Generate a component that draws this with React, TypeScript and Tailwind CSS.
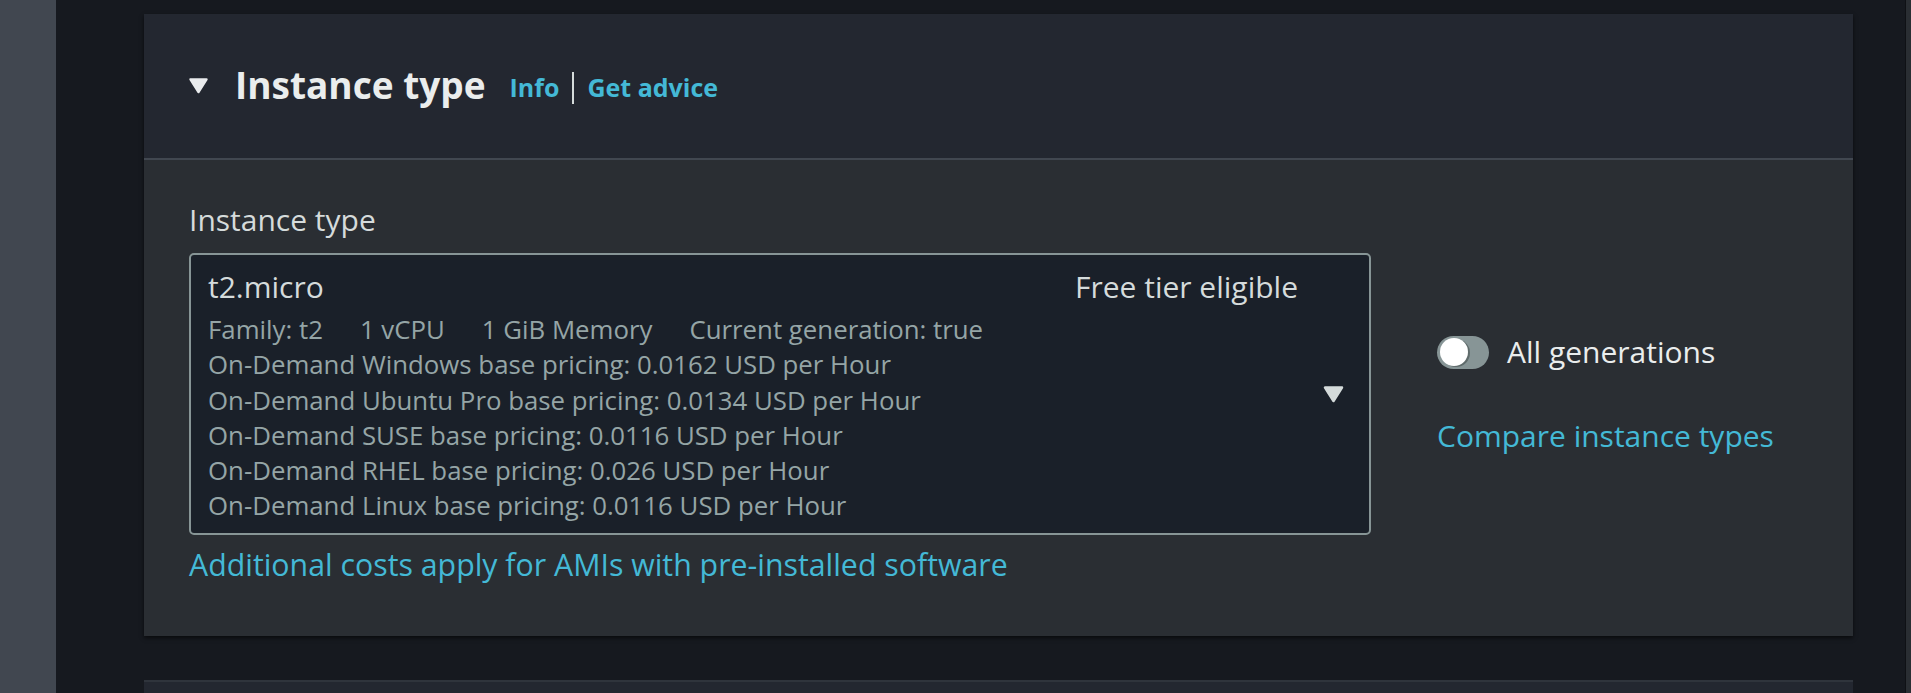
const pricing = [
  'On-Demand Windows base pricing: 0.0162 USD per Hour',
  'On-Demand Ubuntu Pro base pricing: 0.0134 USD per Hour',
  'On-Demand SUSE base pricing: 0.0116 USD per Hour',
  'On-Demand RHEL base pricing: 0.026 USD per Hour',
  'On-Demand Linux base pricing: 0.0116 USD per Hour',
];

const tags = ['Family: t2', '1 vCPU', '1 GiB Memory', 'Current generation: true'];

const Caret = ({ className }: { className?: string }) => (
  <svg viewBox="0 0 21 18" className={className}>
    <path d="M2 2.5 L19 2.5 L10.5 16 Z" fill="currentColor" stroke="currentColor" strokeWidth="2.5" strokeLinejoin="round" />
  </svg>
);

export default function App() {
  return (
    <div className="flex h-screen w-full overflow-hidden bg-[#16191f] font-['Open_Sans',sans-serif]">
      <div className="w-[56px] shrink-0 bg-[#414750]" />

      <main className="flex-1 pl-[88px] pr-[52px] pt-[14px]">
        <section className="bg-[#2a2e33] shadow-[0_2px_4px_rgba(0,0,0,0.6)]">
          <header className="flex h-[146px] items-center border-b-2 border-[#414750] bg-[#232730] px-[44px] pb-[2px]">
            <Caret className="h-[17px] w-[21px] text-[#e9ebed]" />
            <h2 className="ml-[26px] text-[37px] font-bold leading-[48px] text-[#eaeded]">Instance type</h2>
            <div className="ml-[24px] mt-[6px] flex items-center text-[25px] font-bold text-[#44b9d6]">
              <span>Info</span>
              <span className="mx-[13px] h-[32px] w-[2px] bg-[#d5dbdb]" />
              <span>Get advice</span>
            </div>
          </header>

          <div className="px-[45px] pb-[49px] pt-[38px]">
            <div className="text-[30px] leading-[44px] text-[#d5dbdb]">Instance type</div>

            <div className="mt-[11px] flex items-center gap-[66px]">
              <div className="flex h-[282px] w-[1182px] items-center rounded-[5px] border-2 border-[#879596] bg-[#1a2029] pl-[17px] pr-[25px]">
                <div className="flex h-full flex-1 flex-col pt-[10px]">
                  <div className="flex items-center justify-between text-[30px] leading-[44px] text-[#d5dbdb]">
                    <span>t2.micro</span>
                    <span>Free tier eligible</span>
                  </div>
                  <div className="mt-[3px] flex gap-[37px] text-[25.8px] leading-[35.3px] text-[#95a5a6]">
                    {tags.map((t) => (
                      <span key={t}>{t}</span>
                    ))}
                  </div>
                  {pricing.map((p) => (
                    <div key={p} className="text-[25.8px] leading-[35.3px] text-[#95a5a6]">
                      {p}
                    </div>
                  ))}
                </div>
                <Caret className="ml-[25px] h-[18px] w-[21px] text-[#d5dbdb]" />
              </div>

              <div className="flex flex-col gap-[40px]">
                <div className="flex items-center gap-[18px]">
                  <div className="flex h-[33px] w-[52px] items-center rounded-full bg-[#879596] pl-[3px]">
                    <div className="h-[28px] w-[28px] rounded-full bg-white shadow-[2px_1px_0_#5f6b6b]" />
                  </div>
                  <span className="text-[30px] leading-[44px] text-[#eaeded]">All generations</span>
                </div>
                <a className="text-[30px] leading-[44px] text-[#44b9d6]">Compare instance types</a>
              </div>
            </div>

            <a className="mt-[8px] block text-[30.3px] leading-[44px] text-[#44b9d6]">
              Additional costs apply for AMIs with pre-installed software
            </a>
          </div>
        </section>

        <section className="mt-[44px] h-[200px] border-t-2 border-[#2f343c] bg-[#232730]" />
      </main>

      <div className="w-[6px] shrink-0 border-l border-[#0f1115] bg-[#2a2e33]" />
    </div>
  );
}
